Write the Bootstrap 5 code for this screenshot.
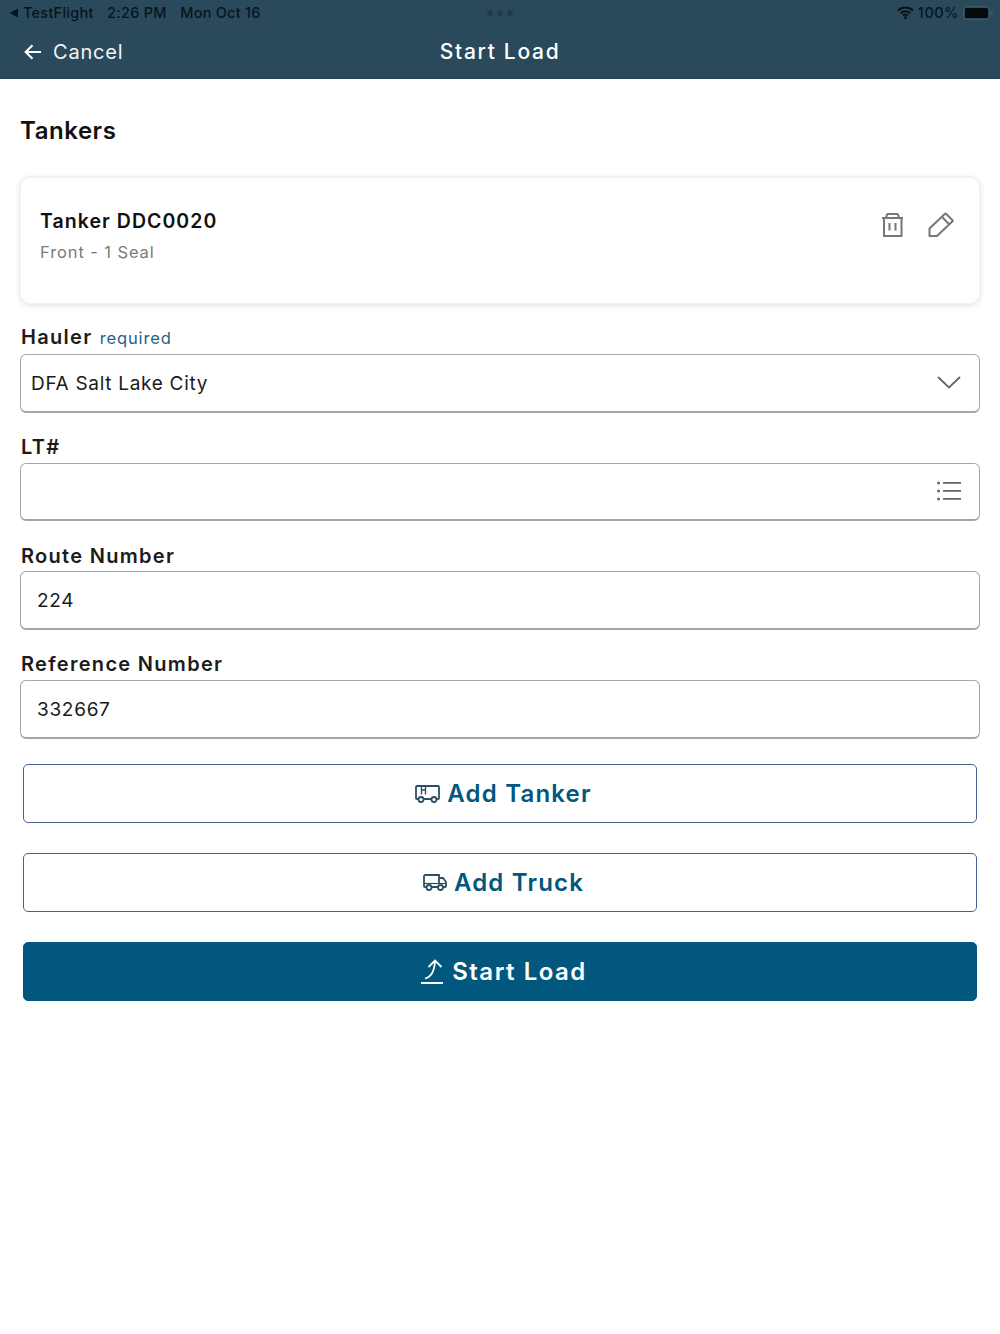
<!DOCTYPE html>
<html lang="en">
<head>
<meta charset="utf-8">
<title>Start Load</title>
<link href="https://cdn.jsdelivr.net/npm/bootstrap@5.3.0/dist/css/bootstrap.min.css" rel="stylesheet">
<style>
html,body{height:100%}
body{font-family:Inter,"Open Sans","Liberation Sans",sans-serif;background:#fff;color:#111;}
.app-head{background:#2a4a5b;height:79px;border-bottom:1px solid #24404f}
.status-row{height:25px;padding:0 7px 0 9px;font-size:14.5px;font-weight:500;color:#08141b}
.status-row svg{display:block}
.status-left{gap:13.5px;letter-spacing:.25px}
.status-right{letter-spacing:.5px}
.dots{left:487px;top:10px;gap:4px}
.dots i{display:block;width:6px;height:6px;border-radius:50%;background:#1f3a48}
.nav-row{height:53px;padding:0 20px 0 24px;color:#fff;font-size:20px}
.nav-cancel{gap:11px;letter-spacing:.8px;font-weight:400;color:#f2f5f6}
.nav-title{left:0;right:0;top:0;line-height:54px;text-align:center;font-weight:500;letter-spacing:1.7px;font-size:21px}
.page-body{padding:0 20px}
.sec-title{font-size:24px;font-weight:600;margin:0;padding-top:38px;line-height:27px;height:98px;letter-spacing:.55px}
.tank-card{height:127px;border:1px solid #f1f1f1;border-radius:10px;box-shadow:0 1px 6px rgba(0,0,0,.13);padding:31px 19px 0;margin-bottom:22.3px}
.tank-name{font-size:19.5px;font-weight:600;line-height:24px;letter-spacing:1.05px}
.tank-sub{font-size:16.5px;color:#7b7b7b;margin-top:9px;line-height:20px;letter-spacing:.9px}
.tank-tools{gap:24px;padding:3px 6px 0 0}
.fgroup{margin-bottom:23.33px}
.flabel{display:block;font-size:20px;font-weight:600;line-height:22.67px;margin-bottom:4px;padding-left:1px;letter-spacing:1.3px;color:#1c1c1c}
.freq{font-size:16.5px;font-weight:400;color:#1f6288;letter-spacing:.85px;margin-left:1px}
.fbox{height:58.67px;border:1px solid #a6a6a6;border-bottom-width:2px;border-radius:6px;font-size:19px;letter-spacing:.7px;color:#1a1a1a;padding:0 18px 0 16px;background:#fff}
.fbox.sel{padding-left:10px}
.ftext{padding-top:3px}
.act-wrap{padding:0 3px;margin-top:25.5px}
.act-btn{height:59px;width:100%;border:1.5px solid #44648f;border-radius:5px;background:#fff;color:#01577e;font-size:24px;font-weight:600;letter-spacing:1.2px;gap:7px;margin-bottom:30px;padding:0 0 0 7px}
.act-btn:hover{background:#fff;color:#01577e;border-color:#44648f}
.act-fill,.act-fill:hover{background:#01577e;border-color:#01577e;color:#fff}
.act-fill{letter-spacing:1.5px;gap:8px}
</style>
</head>
<body>
<header class="app-head position-relative">
  <div class="status-row d-flex align-items-center justify-content-between">
    <div class="status-left d-flex align-items-center">
      <span class="d-flex align-items-center gap-1"><svg width="10" height="10" viewBox="0 0 10 10"><path d="M9 0.5V9.500L0.500 5Z" fill="#08141b"/></svg>TestFlight</span>
      <span>2:26 PM</span>
      <span>Mon Oct 16</span>
    </div>
    <div class="status-right d-flex align-items-center gap-1">
      <svg width="17" height="13" viewBox="0 0 17 13"><path d="M1 4.600C5.300.6 11.700.6 16 4.600M3.500 7.200C6.300 4.600 10.700 4.600 13.500 7.200M6 9.600C7.400 8.400 9.600 8.400 11 9.600" fill="none" stroke="#08141b" stroke-width="2"/><circle cx="8.500" cy="11.500" r="1.500" fill="#08141b"/></svg>
      <span>100%</span>
      <svg width="30" height="14" viewBox="0 0 30 14"><rect x=".5" y=".5" width="26" height="13" rx="3" fill="none" stroke="#3f5967"/><rect x="2" y="2" width="23" height="10" rx="1.500" fill="#050a0d"/><rect x="28" y="5" width="1.500" height="4" fill="#3f5967"/></svg>
    </div>
  </div>
  <div class="dots position-absolute d-flex"><i></i><i></i><i></i></div>
  <div class="nav-row d-flex align-items-center position-relative">
    <div class="nav-title position-absolute">Start Load</div>
    <div class="nav-cancel d-flex align-items-center position-relative">
      <svg width="18" height="16" viewBox="0 0 18 16"><path d="M17 8H2M8.500 1.200 1.600 8l6.900 6.800" fill="none" stroke="#fff" stroke-width="2"/></svg>
      <span>Cancel</span>
    </div>
  </div>
</header>
<main class="page-body">
  <h1 class="sec-title">Tankers</h1>
  <section class="tank-card d-flex justify-content-between bg-white">
    <div>
      <div class="tank-name">Tanker DDC0020</div>
      <div class="tank-sub">Front - 1 Seal</div>
    </div>
    <div class="tank-tools d-flex align-items-start">
      <svg width="23" height="26" viewBox="0 0 23 26" fill="none" stroke="#777" stroke-width="2"><path d="M1 6H22M5 6 6 2.500Q6.300 2 7 2H16Q16.700 2 17 2.500L18 6M3 6V24H20.500V6M8.500 11V18.500M14.500 11V18.500"/></svg>
      <svg width="26" height="26" viewBox="0 0 26 26" fill="none" stroke="#777" stroke-width="2" stroke-linejoin="round"><path d="M1.500 24V16.500L17 1.800Q17.500 1.300 18 1.800L24.500 8.300Q25 8.800 24.500 9.300L9 24ZM14 5l7 7"/></svg>
    </div>
  </section>
  <div class="fgroup">
    <label class="flabel">Hauler <span class="freq">required</span></label>
    <div class="fbox sel d-flex align-items-center justify-content-between">
      <span class="ftext">DFA Salt Lake City</span>
      <svg width="24" height="13" viewBox="0 0 24 13"><path d="M1 1 12 11.500 23 1" fill="none" stroke="#666" stroke-width="1.800"/></svg>
    </div>
  </div>
  <div class="fgroup">
    <label class="flabel">LT#</label>
    <div class="fbox d-flex align-items-center justify-content-end">
      <svg width="24" height="20" viewBox="0 0 24 20" fill="#666"><circle cx="1.500" cy="2" r="1.500"/><circle cx="1.500" cy="10" r="1.500"/><circle cx="1.500" cy="18" r="1.500"/><rect x="6" y="1" width="18" height="1.800"/><rect x="6" y="9" width="18" height="1.800"/><rect x="6" y="17" width="18" height="1.800"/></svg>
    </div>
  </div>
  <div class="fgroup">
    <label class="flabel">Route Number</label>
    <div class="fbox d-flex align-items-center"><span class="ftext">224</span></div>
  </div>
  <div class="fgroup">
    <label class="flabel">Reference Number</label>
    <div class="fbox d-flex align-items-center"><span class="ftext">332667</span></div>
  </div>
  <div class="act-wrap">
    <button type="button" class="btn act-btn d-flex align-items-center justify-content-center">
      <svg width="25" height="18" viewBox="0 0 25 18" fill="none" stroke="#2c4f65" stroke-width="1.800"><path d="M3.500 14H2Q1 14 1 13V2Q1 1 2 1H23Q24 1 24 2V13Q24 14 23 14H21.500M8.500 14H16.500"/><circle cx="6" cy="14.500" r="2.500"/><circle cx="19" cy="14.500" r="2.500"/><path d="M6.500 1V9.500M10.500 1V9.500M6.500 5H10.500" stroke-width="1.400"/></svg>
      Add Tanker
    </button>
    <button type="button" class="btn act-btn d-flex align-items-center justify-content-center">
      <svg width="24" height="17" viewBox="0 0 24 17" fill="none" stroke="#2c4f65" stroke-width="1.800"><path d="M3.500 13H2Q1 13 1 12V2.500Q1 1 2.500 1H16V4H20L23 8V12Q23 13 22 13H20M8.500 13H15M16 4V9"/><path d="M1 9.500H23" stroke-width="1.200"/><circle cx="6" cy="13.500" r="2.500"/><circle cx="17.500" cy="13.500" r="2.500"/></svg>
      Add Truck
    </button>
    <button type="button" class="btn act-btn act-fill d-flex align-items-center justify-content-center">
      <svg width="24" height="26" viewBox="0 0 24 26" fill="none" stroke="#fff" stroke-width="1.800"><path d="M1 24H23M5 19.500C11 18 14.500 12.500 15 2M8.500 8 15 1.500 21.500 8"/></svg>
      Start Load
    </button>
  </div>
</main>
<script src="https://cdn.jsdelivr.net/npm/bootstrap@5.3.0/dist/js/bootstrap.bundle.min.js"></script>
</body>
</html>
